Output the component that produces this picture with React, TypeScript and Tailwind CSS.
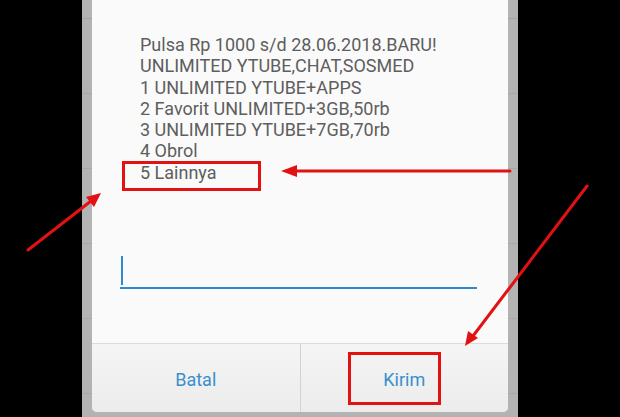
import React from 'react';

const LINES = [
  'Pulsa Rp 1000 s/d 28.06.2018.BARU!',
  'UNLIMITED YTUBE,CHAT,SOSMED',
  '1 UNLIMITED YTUBE+APPS',
  '2 Favorit UNLIMITED+3GB,50rb',
  '3 UNLIMITED YTUBE+7GB,70rb',
  '4 Obrol',
  '5 Lainnya',
];

function Strip() {
  // dimmed list rows behind the dialog
  return (
    <div className="flex w-[10px] flex-col">
      <div className="h-[19px] shrink-0 border-b border-[#a3a3a3]" />
      {[0, 1, 2, 3, 4].map((i) => (
        <div key={i} className="h-[75px] shrink-0 border-b border-[#a8a8a8]" />
      ))}
    </div>
  );
}

function Arrows() {
  return (
    <svg className="pointer-events-none absolute inset-0" width={620} height={417} viewBox="0 0 620 417">
      <g stroke="#e31212" strokeWidth={3} strokeLinecap="round" fill="#e31212">
        <line x1={510} y1={171} x2={294} y2={171} />
        <polygon points="281,171 297,165 297,177" stroke="none" />
        <line x1={28} y1={250} x2={91} y2={201} />
        <polygon points="101,193 86,197 94,207" stroke="none" />
        <line x1={587} y1={186} x2={473} y2={336} />
        <polygon points="465,346 468,331 478,338" stroke="none" />
      </g>
    </svg>
  );
}

export default function App() {
  return (
    <div className="relative h-[417px] w-[620px] overflow-hidden bg-black font-['Roboto',sans-serif]">
      <div className="ml-[82px] flex h-[417px] w-[436px] bg-[#b3b3b3]">
        <Strip />
        <div className="flex h-[412px] w-[416px] flex-col overflow-hidden rounded-b-[5px] bg-[#fafafa]">
          {/* message */}
          <div className="pl-[48px] pt-[34px] text-[18px] leading-[21.3px] text-[#5e5e5e]">
            {LINES.map((l) => (
              <div key={l}>{l}</div>
            ))}
          </div>

          {/* input */}
          <div className="ml-[28px] mr-[31px] mt-[73px] h-[33px] border-b-[2px] border-[#2b8bcc]">
            <div className="ml-[1px] h-[29px] w-[2px] bg-[#2b8bcc]" />
          </div>

          {/* buttons */}
          <div className="mt-auto flex h-[69px] border-t border-[#dcdcdc] bg-gradient-to-b from-[#f5f5f5] to-[#ececec] text-[18px] text-[#3a8fcc]">
            <div className="flex flex-1 items-center justify-center pt-[3px]">Batal</div>
            <div className="flex flex-1 items-center justify-center border-l border-[#d2d2d2] pt-[3px]">Kirim</div>
          </div>
        </div>
        <Strip />
      </div>

      {/* annotation boxes */}
      <div className="absolute left-[122px] top-[161px] h-[30px] w-[139px] border-[3px] border-[#e31212]" />
      <div className="absolute left-[348px] top-[352px] h-[53px] w-[93px] border-[3px] border-[#e31212]" />
      <Arrows />
    </div>
  );
}
